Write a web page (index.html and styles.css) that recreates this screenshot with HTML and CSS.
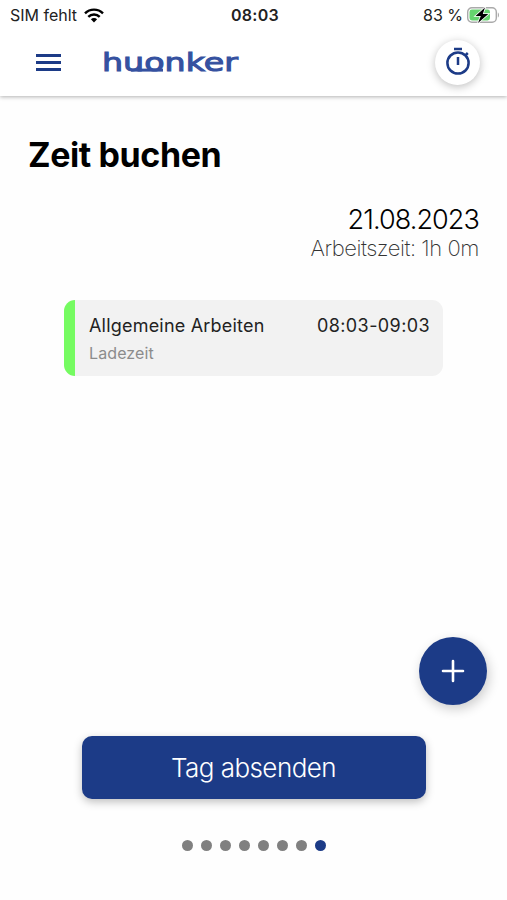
FILE: index.html
```html
<!DOCTYPE html>
<html lang="de">
<head>
    <meta charset="UTF-8">
    <meta name="viewport" content="width=device-width, initial-scale=1">
    <title>Zeit buchen</title>
    <link rel="stylesheet" href="styles.css">
</head>
<body>
    <header class="header">
        <div class="statusbar">
            <div class="status-left">
                <span class="carrier">SIM fehlt</span>
                <svg class="wifi" width="20" height="15" viewBox="0 0 20 15">
                    <g fill="none" stroke="#000" stroke-width="2.4">
                        <path d="M1 5.4a12.7 12.7 0 0 1 18 0"/>
                        <path d="M4.3 8.9a8 8 0 0 1 11.4 0"/>
                    </g>
                    <path d="M10 14.4L6.9 11.3a4.4 4.4 0 0 1 6.2 0z"/>
                </svg>
            </div>
            <span class="clock">08:03</span>
            <div class="status-right">
                <span class="percent">83 %</span>
                <svg class="battery" width="34" height="18" viewBox="0 0 34 18">
                    <rect x="1.7" y="1.7" width="28.6" height="14.6" rx="4.2" fill="#fff" stroke="#aaa" stroke-width="1.4"/>
                    <rect x="3.5" y="3.5" width="20.5" height="11" rx="2.4" fill="#65d46e"/>
                    <path d="M31.8 6.5c1.6.6 1.6 4.4 0 5z" fill="#aaa"/>
                    <path d="M19 1.5L9.5 10h5.3L12 17l10.3-9h-5.5z" fill="#000" stroke="#fff" stroke-width="1.6" paint-order="stroke"/>
                </svg>
            </div>
        </div>
        <nav class="toolbar">
            <button class="menu" aria-label="Menü">
                <span></span>
                <span></span>
                <span></span>
            </button>
            <svg class="logo" width="138" height="28" viewBox="0 0 138 28">
                <text x="0" y="23" textLength="136" lengthAdjust="spacingAndGlyphs">huonker</text>
                <!-- Verbindungslinie im Schriftzug -->
                <rect x="29" y="20.6" width="32" height="3"/>
            </svg>
            <button class="timer" aria-label="Stoppuhr">
                <svg width="26" height="30" viewBox="0 0 26 30" fill="none" stroke="#1c3b87" stroke-width="2.5">
                    <circle cx="13" cy="17" r="10.6"/>
                    <path d="M9 3h8M13 11v8M20.4 9.4l2.4-2.4"/>
                </svg>
            </button>
        </nav>
    </header>

    <main class="page">
        <h1>Zeit buchen</h1>
        <div class="day">
            <div class="date">21.08.2023</div>
            <div class="worktime">Arbeitszeit: 1h 0m</div>
        </div>

        <div class="entry">
            <div class="entry-text">
                <div class="entry-title">Allgemeine Arbeiten</div>
                <div class="entry-type">Ladezeit</div>
            </div>
            <div class="entry-time">08:03-09:03</div>
        </div>

        <button class="add" aria-label="Hinzufügen">
            <svg width="24" height="24" viewBox="0 0 24 24" stroke="#fff" stroke-width="2.6" stroke-linecap="round">
                <path d="M12 2v20M2 12h20"/>
            </svg>
        </button>

        <button class="submit">Tag absenden</button>

        <div class="dots">
            <span></span>
            <span></span>
            <span></span>
            <span></span>
            <span></span>
            <span></span>
            <span></span>
            <span class="active"></span>
        </div>
    </main>
</body>
</html>
```

FILE: styles.css
```css
* {
    box-sizing: border-box;
}
body {
    margin: 0;
    height: 900px;
    display: flex;
    flex-direction: column;
    overflow: hidden;
    background-color: #fefefe;
    color: #000;
    font-family: Inter, "Liberation Sans", sans-serif;
}
button {
    padding: 0;
    border: none;
    font-family: inherit;
    cursor: pointer;
}
.header {
    height: 96px;
    background-color: #fff;
    box-shadow: 0 1px 4px rgba(0, 0, 0, 0.3);
}
.statusbar {
    display: grid;
    grid-template-columns: 1fr auto 1fr;
    align-items: center;
    height: 30px;
    padding: 0 7px 0 10px;
    font-size: 16px;
    color: #222;
}
.status-left,
.status-right {
    display: flex;
    align-items: center;
}
.status-left {
    gap: 7px;
}
.status-right {
    justify-content: flex-end;
    gap: 3px;
}
.clock {
    font-weight: 600;
    letter-spacing: 0.3px;
}
.toolbar {
    display: flex;
    align-items: center;
    height: 64px;
    padding: 0 27px 0 36px;
}
.menu {
    display: flex;
    flex-direction: column;
    gap: 4px;
    width: 25px;
    background: none;
}
.menu span {
    height: 3px;
    background-color: #1c3b87;
}
.logo {
    margin-left: 41px;
    fill: #3551a0;
}
.logo text {
    font-family: "DejaVu Sans", sans-serif;
    font-size: 25px;
    stroke: #3551a0;
    stroke-width: 1px;
}
.timer {
    display: flex;
    align-items: center;
    justify-content: center;
    width: 45px;
    height: 45px;
    margin-left: auto;
    padding-bottom: 2px;
    border-radius: 50%;
    background-color: #fff;
    box-shadow: 0 2px 8px rgba(0, 0, 0, 0.25);
}
.page {
    display: flex;
    flex: 1;
    flex-direction: column;
    padding: 38px 28px 0;
}
h1 {
    margin: 0;
    font-size: 34px;
    line-height: 42px;
    font-weight: 700;
    letter-spacing: -0.4px;
}
.day {
    margin-top: 28px;
    text-align: right;
}
.date {
    font-size: 27px;
    line-height: 32px;
    font-weight: 300;
    letter-spacing: -0.9px;
}
.worktime {
    font-size: 22px;
    line-height: 25px;
    font-weight: 200;
    letter-spacing: -0.45px;
    color: #333;
}
.entry {
    display: flex;
    justify-content: space-between;
    width: 379px;
    height: 76px;
    margin: 39px 0 0 36px;
    padding: 14px 13px 0 14px;
    border-left: 11px solid #75fb61;
    border-radius: 11px;
    background-color: #f2f2f2;
    font-size: 18px;
    line-height: 24px;
    letter-spacing: 0.2px;
    color: #222;
}
.entry-time {
    letter-spacing: 0.4px;
}
.entry-type {
    margin-top: 3px;
    font-size: 16px;
    letter-spacing: 0.1px;
    color: #8c8c8c;
}
.add {
    display: flex;
    align-items: center;
    justify-content: center;
    align-self: flex-end;
    width: 68px;
    height: 68px;
    margin: 261px -8px 0 0;
    border-radius: 50%;
    background-color: #1c3b87;
    box-shadow: 2px 4px 12px rgba(0, 0, 0, 0.2);
}
.submit {
    align-self: center;
    width: 344px;
    height: 63px;
    margin-top: 31px;
    border-radius: 10px;
    background-color: #1c3b87;
    box-shadow: 0 3px 9px rgba(0, 0, 0, 0.25);
    color: #fff;
    font-size: 26px;
    font-weight: 300;
    letter-spacing: -0.55px;
}
.dots {
    display: flex;
    justify-content: center;
    gap: 8px;
    margin-top: 41px;
}
.dots span {
    width: 11px;
    height: 11px;
    border-radius: 50%;
    background-color: #808080;
}
.dots .active {
    background-color: #1c3b87;
}
```
